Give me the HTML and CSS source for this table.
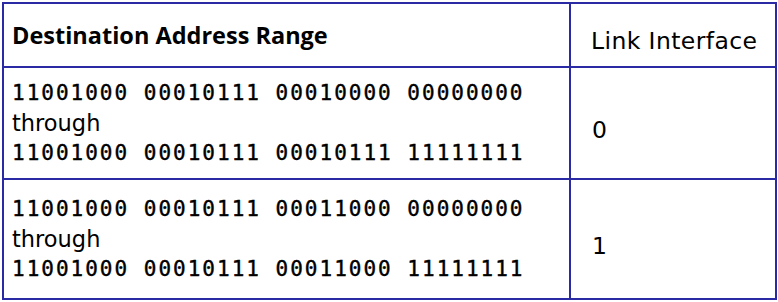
FILE: index.html
```html
<!DOCTYPE html>
<html>
<head>
<meta charset="utf-8">
<link rel="stylesheet" href="styles.css">
</head>
<body>
<div class="table">
  <div class="cell head-main"><span class="bold">Destination Address Range</span></div>
  <div class="cell head-side"><span>Link Interface</span></div>

  <div class="cell range">
    <div class="bin">11001000 00010111 00010000 00000000</div>
    <div class="word">through</div>
    <div class="bin">11001000 00010111 00010111 11111111</div>
  </div>
  <div class="cell iface"><span>0</span></div>

  <div class="cell range">
    <div class="bin">11001000 00010111 00011000 00000000</div>
    <div class="word">through</div>
    <div class="bin">11001000 00010111 00011000 11111111</div>
  </div>
  <div class="cell iface"><span>1</span></div>
</div>
</body>
</html>
```

FILE: styles.css
```css
html, body {
  margin: 0;
  padding: 0;
  background: #ffffff;
}

body {
  padding: 2px 0 0 2px;
  font-family: "DejaVu Sans", "Open Sans", sans-serif;
  color: #000000;
}

.table {
  display: grid;
  grid-template-columns: 567px 206px;
  grid-template-rows: 64px 112px 120px;
  width: max-content;
  border-left: 2px solid #2a2aa4;
  border-top: 2px solid #2a2aa4;
}

.cell {
  box-sizing: border-box;
  border-right: 2px solid #2a2aa4;
  border-bottom: 2px solid #2a2aa4;
  display: flex;
}

.head-main {
  align-items: center;
  padding-left: 8px;
}

.bold {
  font-family: "Open Sans", "DejaVu Sans", sans-serif;
  font-weight: 700;
  font-size: 23.5px;
}

.head-side {
  align-items: center;
  padding: 12px 0 0 20px;
  font-size: 23.5px;
  letter-spacing: 0.4px;
}

.range {
  flex-direction: column;
  justify-content: center;
  padding-left: 8px;
  line-height: 30px;
}

.bin {
  font-family: "DejaVu Sans Mono", "Liberation Mono", monospace;
  font-size: 21px;
  letter-spacing: 2px;
  white-space: pre;
  -webkit-text-stroke: 0.4px #000000;
}

.word {
  font-size: 22.5px;
}

.iface {
  align-items: center;
  padding: 14px 0 0 21px;
  font-size: 23.5px;
}
```
